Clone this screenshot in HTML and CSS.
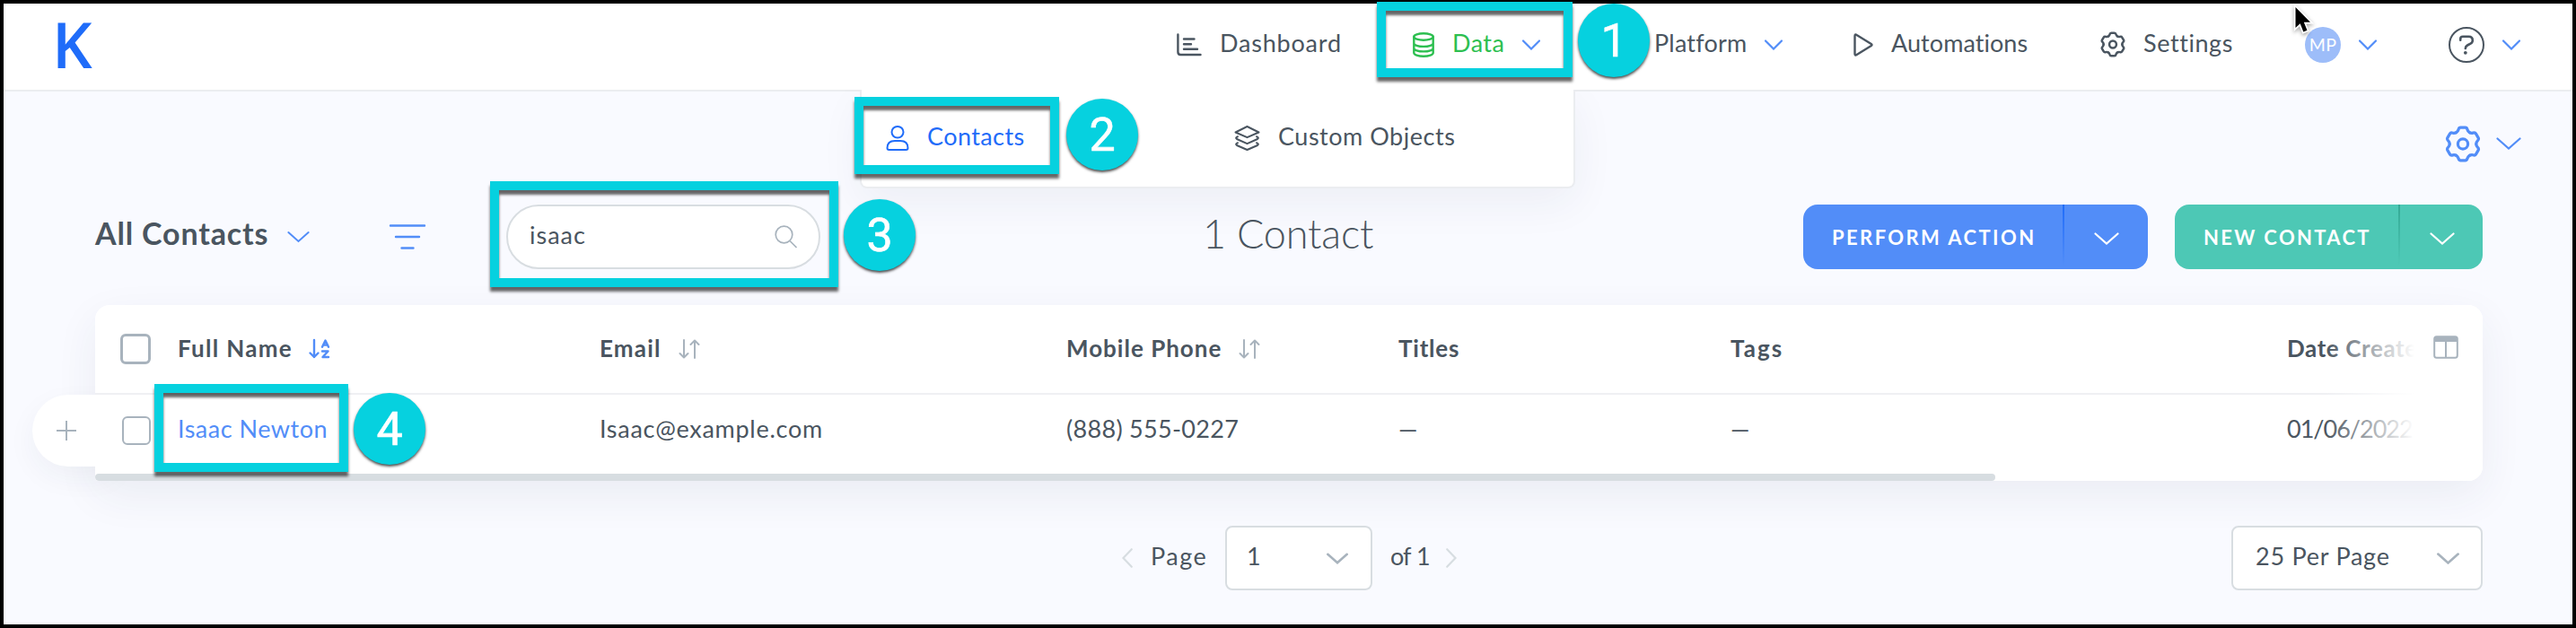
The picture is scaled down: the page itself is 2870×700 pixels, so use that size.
FILE: index.html
```html
<!DOCTYPE html>
<html lang="en">
<head>
<meta charset="utf-8">
<title>Contacts</title>
<link rel="stylesheet" href="styles.css">
</head>
<body>
<svg class="defs" width="0" height="0" aria-hidden="true">
  <symbol id="chev" viewBox="0 0 28 14"><path d="M1.5 1.5 14 12.5 26.5 1.5"/></symbol>
  <symbol id="chev-s" viewBox="0 0 20 12"><path d="M1 1.5 10 10.5 19 1.5"/></symbol>
  <symbol id="gear" viewBox="-20 -20 40 40">
    <g id="teeth">
      <path id="tooth" d="M-7.4-12.8Q-5.6-13.8-5-16Q-4.4-18.3-2.6-18.3H2.6Q4.4-18.3 5-16Q5.6-13.8 7.4-12.8"/>
      <use href="#tooth" transform="rotate(60)"/><use href="#tooth" transform="rotate(120)"/><use href="#tooth" transform="rotate(180)"/><use href="#tooth" transform="rotate(240)"/><use href="#tooth" transform="rotate(300)"/>
    </g>
    <circle r="5.6"/>
  </symbol>
  <symbol id="sort" viewBox="0 0 24 22"><path d="M6 1V20M1.5 16 6 20.5 10.5 16M18 21V2M13.5 6 18 1.5 22.5 6"/></symbol>
</svg>

<div class="screen">
  <header class="header">
    <span class="logo">K</span>
    <a class="nav-item">
      <svg class="ico" width="28" height="26" viewBox="0 0 28 26"><path d="M1.4 1.5V21Q1.4 24 4.4 24H26.5M8 6.5H19.5M8 12.2H16M8 17.8H23"/></svg>
      <span class="label t-dashboard">Dashboard</span>
    </a>
    <a class="nav-item active">
      <svg class="ico" width="24" height="28" viewBox="0 0 24 28"><ellipse cx="12" cy="5" rx="10.7" ry="3.7"/><path d="M1.3 5V23C1.3 25 6 26.7 12 26.7S22.7 25 22.7 23V5M1.3 12.2C1.3 14.2 6 15.9 12 15.9S22.7 14.2 22.7 12.2M1.3 17.700C1.3 19.700 6 21.400 12 21.400S22.700 19.700 22.700 17.700"/></svg>
      <span class="label t-data">Data</span>
      <svg class="chev" width="20" height="12"><use href="#chev-s"/></svg>
    </a>
    <a class="nav-item">
      <span class="label t-platform">Platform</span>
      <svg class="chev" width="20" height="12"><use href="#chev-s"/></svg>
    </a>
    <a class="nav-item">
      <svg class="ico" width="22" height="26" viewBox="0 0 22 26"><path d="M1.500 3.200Q1.500 .6 3.600 2L19.800 12Q21.300 13 19.800 14L3.600 24Q1.500 25.300 1.500 23Z"/></svg>
      <span class="label t-automations">Automations</span>
    </a>
    <a class="nav-item">
      <svg class="ico gear-s" width="28" height="29"><use href="#gear"/></svg>
      <span class="label t-settings">Settings</span>
    </a>
    <a class="nav-item user">
      <span class="avatar">MP</span>
      <svg class="chev" width="20" height="12"><use href="#chev-s"/></svg>
    </a>
    <a class="nav-item user">
      <svg class="ico help" width="40" height="40" viewBox="0 0 40 40"><circle cx="20" cy="20" r="19"/><path d="M13.200 14.800V13.500Q13.200 10.800 16 10.800H22.500Q26.800 10.800 26.800 15Q26.800 17.500 24.500 18.600L21 20.500Q18.800 21.700 18.800 24"/><circle class="dot" cx="18.800" cy="28.800" r="1.900"/></svg>
      <svg class="chev" width="20" height="12"><use href="#chev-s"/></svg>
    </a>
  </header>

  <nav class="dropdown">
    <a class="sub current">
      <svg class="ico" width="26" height="28" viewBox="0 0 26 28"><rect x="6.500" y="1" width="13" height="12.500" rx="6.300"/><path d="M1.500 25Q1.500 17 10 17H16Q24.500 17 24.500 25Q24.500 27 22.500 27H3.500Q1.500 27 1.500 25Z"/></svg>
      <span class="label t-contacts">Contacts</span>
    </a>
    <a class="sub">
      <svg class="ico" width="29" height="28" viewBox="0 0 29 28"><path d="M14.500 1 27.500 7.500 14.500 13.200 1.500 7.500ZM4 12.200Q.8 13.500 3 15L14.500 20.200 26 15Q28.200 13.500 25 12.200M4 19.200Q.8 20.500 3 22L14.500 27 26 22Q28.200 20.500 25 19.200"/></svg>
      <span class="label t-custom">Custom Objects</span>
    </a>
  </nav>

  <main class="main">
    <div class="page-settings">
      <svg class="gear-l" width="40" height="41"><use href="#gear"/></svg>
      <svg class="chev" width="28" height="14"><use href="#chev"/></svg>
    </div>

    <div class="toolbar">
      <div class="view">
        <span class="view-name">All Contacts</span>
        <svg class="chev" width="25" height="14"><use href="#chev"/></svg>
      </div>
      <svg class="filter" width="40" height="28" viewBox="0 0 40 28"><path d="M1 1.500H39M7 14H33M13.500 26.500H26.500"/></svg>
      <div class="search">
        <span class="t-query">isaac</span>
        <svg class="glass" width="26" height="26" viewBox="0 0 26 26"><circle cx="10.500" cy="10.500" r="9.300"/><path d="M17 17.500 24.500 25"/></svg>
      </div>
      <h1 class="count">1 Contact</h1>
      <div class="actions">
        <button class="btn blue"><span class="btn-text t-perform">PERFORM ACTION</span><span class="btn-more"><svg class="chev" width="28" height="14"><use href="#chev"/></svg></span></button>
        <button class="btn green"><span class="btn-text t-new">NEW CONTACT</span><span class="btn-more"><svg class="chev" width="28" height="14"><use href="#chev"/></svg></span></button>
      </div>
    </div>

    <section class="table-wrap">
      <div class="row-add"><svg width="22" height="22" viewBox="0 0 22 22"><path d="M11 0V22M0 11H22"/></svg></div>
      <div class="card">
        <div class="row head">
          <span class="check"></span>
          <span class="cell"><span class="h-name">Full Name</span>
            <svg class="az" width="24" height="22" viewBox="0 0 24 22"><path d="M6 1V20M1.500 15.500 6 20 10.500 15.500M15 8.700 18.500 1.500 22 8.700M16 6.500H21M15 13.500H21.500L15.500 20H22"/></svg></span>
          <span class="cell"><span class="h-email">Email</span><svg class="sort" width="24" height="22"><use href="#sort"/></svg></span>
          <span class="cell"><span class="h-phone">Mobile Phone</span><svg class="sort" width="24" height="22"><use href="#sort"/></svg></span>
          <span class="cell"><span class="h-titles">Titles</span></span>
          <span class="cell"><span class="h-tags">Tags</span></span>
          <span class="cell"><span class="h-date">Date Created</span></span>
        </div>
        <div class="row body">
          <span class="check thin"></span>
          <span class="cell link b-name">Isaac Newton</span>
          <span class="cell b-email">Isaac@example.com</span>
          <span class="cell b-phone">(888) 555-0227</span>
          <span class="cell">—</span>
          <span class="cell">—</span>
          <span class="cell b-date">01/06/2022</span>
        </div>
        <div class="scrollbar"></div>
        <div class="fade">
          <svg width="28" height="26" viewBox="0 0 28 26"><rect x="1.200" y="1.200" width="25.600" height="23.600" rx="2.500"/><path class="bar" d="M1 3Q1 1 3 1H25Q27 1 27 3V7H1Z"/><path d="M14 6V24"/></svg>
        </div>
      </div>
    </section>

    <footer class="pager">
      <svg class="arrow" width="12" height="22" viewBox="0 0 12 22"><path d="M10.800 1.200 1.500 11 10.800 20.800"/></svg>
      <span class="page-label">Page</span>
      <div class="select page"><span>1</span><svg class="chev" width="24" height="13"><use href="#chev"/></svg></div>
      <span class="of-label">of 1</span>
      <svg class="arrow" width="12" height="22" viewBox="0 0 12 22"><path d="M1.200 1.200 10.500 11 1.200 20.800"/></svg>
      <div class="select size"><span class="t-size">25 Per Page</span><svg class="chev" width="25" height="13"><use href="#chev"/></svg></div>
    </footer>
  </main>

  <div class="frame"></div>
  <div class="mark m1"></div><div class="step s1">1</div>
  <div class="mark m2"></div><div class="step s2">2</div>
  <div class="mark m3"></div><div class="step s3">3</div>
  <div class="mark m4"></div><div class="step s4">4</div>
  <svg class="cursor" width="26" height="40" viewBox="0 0 26 40"><path d="M3.500 6V29L8.700 24.300 12.300 33.500 16.500 31.700 12.800 22.800H20Z"/></svg>
</div>
</body>
</html>
```
FILE: styles.css
```css
* { box-sizing: border-box; }

body {
  margin: 0;
  font-family: Lato, "Open Sans", sans-serif;
  font-size: 27px;
  line-height: 1.2;
  color: #4a5560;
}

svg { display: block; flex: none; fill: none; overflow: visible; }
.defs { position: absolute; }

.screen {
  position: relative;
  width: 2870px;
  height: 700px;
  overflow: hidden;
  background: #f9faff;
}

/* Header */
.header {
  display: grid;
  grid-template-columns: 1253px 263px 269px 222px 275px 228px 160px 1fr;
  align-items: center;
  height: 102px;
  padding-left: 58px;
  background: #fff;
  border-bottom: 2px solid #ebedf0;
}
.logo {
  font: 600 70px/1 "Open Sans", sans-serif;
  color: #1f6cf9;
  padding-bottom: 2px;
}
.nav-item { display: flex; align-items: center; gap: 20px; white-space: nowrap; }
.label { padding-bottom: 3px; }
.ico { stroke: #4a5560; stroke-width: 2.4; stroke-linecap: round; stroke-linejoin: round; }
.active { color: #2dbf50; }
.active .ico { stroke: #2dbf50; }
.chev { stroke: #528df8; stroke-width: 2.2; stroke-linecap: round; stroke-linejoin: miter; }
.gear-s { stroke-width: 3.6; }
.help { stroke-width: 2; }
.help path { stroke-width: 2.6; }
.help .dot { fill: #4a5560; stroke: none; }
.avatar {
  display: flex;
  align-items: center;
  justify-content: center;
  width: 40px;
  height: 40px;
  border-radius: 50%;
  background: #9dbdf9;
  color: #fff;
  font-size: 19.5px;
  letter-spacing: 0.4px;
}
.t-dashboard { letter-spacing: 0.8px; }
.t-data { letter-spacing: 0.46px; }
.t-platform { letter-spacing: 0.2px; }
.t-automations { letter-spacing: 0.06px; }
.t-settings { letter-spacing: 0.58px; }
.t-contacts { letter-spacing: 0.41px; }
.t-custom { letter-spacing: 0.52px; }

/* Submenu under Data */
.dropdown {
  position: absolute;
  left: 958px;
  top: 100px;
  z-index: 1;
  display: grid;
  grid-template-columns: 388px auto;
  align-items: center;
  width: 797px;
  height: 110px;
  padding-left: 27px;
  background: #fff;
  border: solid #ebedf0;
  border-width: 0 2px 2px;
  border-radius: 0 0 8px 8px;
  clip-path: inset(0 -80px -90px -80px);
  box-shadow: 0 16px 48px rgba(40, 50, 80, 0.06);
}
.sub { display: flex; align-items: center; gap: 20px; white-space: nowrap; }
.sub .label { padding-bottom: 4px; }
.sub .ico { stroke-width: 2; }
.current { color: #1f6cf9; }
.current .ico { stroke: #1f6cf9; }

/* Page */
.page-settings {
  display: flex;
  justify-content: flex-end;
  align-items: center;
  gap: 17px;
  height: 126px;
  padding: 0 61px 10px 0;
}
.gear-l { stroke: #528df8; stroke-width: 3.2; stroke-linecap: round; }

.toolbar {
  position: relative;
  z-index: 2;
  display: grid;
  grid-template-columns: 328px 130px 776px 669px auto;
  align-items: center;
  height: 72px;
  padding: 0 104px 0 106px;
}
.view { display: flex; align-items: center; gap: 21px; }
.view-name { font-size: 34px; font-weight: 700; letter-spacing: 0.84px; padding-bottom: 7px; white-space: nowrap; }
.filter { stroke: #528df8; stroke-width: 2.4; stroke-linecap: round; }
.search {
  display: flex;
  align-items: center;
  justify-content: space-between;
  width: 350px;
  height: 72px;
  padding: 0 23px 0 24px;
  background: #fff;
  border: 2px solid #d8dde1;
  border-radius: 36px;
}
.t-query { letter-spacing: 1px; padding-bottom: 3px; }
.glass { stroke: #a8b3bd; stroke-width: 1.7; }
.count { margin: 0; font-size: 45px; font-weight: 300; letter-spacing: -0.16px; padding-bottom: 8px; }
.actions { display: flex; gap: 30px; }
.btn {
  display: flex;
  height: 72px;
  padding: 0;
  border: 0;
  border-radius: 16px;
  color: #fff;
  font: 700 22px/1.2 Lato, sans-serif;
}
.btn-text { flex: none; display: flex; align-items: center; height: 72px; padding: 2px 0 0 32px; white-space: nowrap; }
.t-perform { width: 289px; letter-spacing: 2.41px; }
.t-new { width: 249px; letter-spacing: 2.35px; }
.btn-more { position: relative; display: flex; align-items: center; height: 72px; padding: 4px 32px 0 35px; }
.btn-more::before {
  content: "";
  position: absolute;
  left: 0;
  top: 0;
  width: 2px;
  height: 68px;
}
.btn .chev { stroke: #fff; }
.blue { background: #528df8; }
.blue .btn-more::before { background: linear-gradient(#1f6cf9, #528df8); }
.green { background: #4dc8b5; }
.green .btn-more { padding-right: 31px; }
.green .btn-more::before { background: linear-gradient(#34a995, #4dc8b5); }

/* Table */
.table-wrap { position: relative; margin: 40px 104px 0 106px; }
.card {
  position: relative;
  height: 196px;
  overflow: hidden;
  background: #fff;
  border-radius: 16px 16px 16px 4px;
}
.table-wrap::before {
  content: "";
  position: absolute;
  inset: 0;
  border-radius: 16px;
  box-shadow: 0 16px 48px rgba(40, 50, 80, 0.07);
}
.row-add {
  position: absolute;
  left: -70px;
  top: 100px;
  width: 90px;
  height: 80px;
  display: flex;
  align-items: center;
  padding-left: 27px;
  background: #fff;
  border-radius: 40px 0 0 40px;
  box-shadow: 0 12px 32px rgba(40, 50, 80, 0.05);
}
.row-add svg { stroke: #a8b3bd; stroke-width: 2; }
.row {
  display: grid;
  grid-template-columns: 92px 470px 520px 370px 370px 620px 218px;
  align-items: center;
}
.head { height: 100px; border-bottom: 2px solid #eff0f3; font-size: 26px; font-weight: 700; }
.body { height: 88px; padding-bottom: 8px; }
.cell { display: flex; align-items: center; gap: 19px; white-space: nowrap; }
.body .cell { padding-bottom: 3px; }
.check { width: 34px; height: 34px; margin-left: 28px; border: 3px solid #a8b3bd; border-radius: 6px; background: #fff; }
.thin { width: 32px; height: 32px; margin-left: 30px; border-width: 2px; }
.link { color: #528df8; }
.sort { stroke: #a8b3bd; stroke-width: 2; stroke-linecap: round; stroke-linejoin: round; }
.az { stroke: #528df8; stroke-width: 2.4; stroke-linecap: round; stroke-linejoin: round; margin-left: -1px; }
.h-name { letter-spacing: 1.3px; }
.h-email { letter-spacing: 1.19px; }
.h-phone { letter-spacing: 1px; }
.h-titles { letter-spacing: 0.78px; }
.h-tags { letter-spacing: 2px; }
.h-date { letter-spacing: 0.6px; }
.b-name { letter-spacing: 0.5px; }
.b-email { letter-spacing: 0.72px; }
.b-phone { letter-spacing: 0.3px; }
.b-date { letter-spacing: -1px; }
.scrollbar { width: 2117px; height: 8px; border-radius: 4px; background: #d7dde1; }
.fade {
  position: absolute;
  right: 0;
  top: 0;
  width: 176px;
  height: 196px;
  padding: 34px 0 0 121px;
  background: linear-gradient(90deg, rgba(255, 255, 255, 0), #fff 100px);
}
.fade svg { stroke: #a8b3bd; stroke-width: 2; }
.fade .bar { fill: #a8b3bd; stroke: none; }

/* Pagination */
.pager {
  position: relative;
  display: flex;
  align-items: center;
  height: 72px;
  margin-top: 50px;
  padding: 0 104px 0 1250px;
}
.arrow { stroke: #d7dde1; stroke-width: 2.2; stroke-linecap: round; }
.page-label { width: 83px; margin-left: 20px; padding-bottom: 3px; letter-spacing: 1.5px; }
.select {
  display: flex;
  align-items: center;
  justify-content: space-between;
  height: 72px;
  background: #fff;
  border: 2px solid #d8dde1;
  border-radius: 8px;
}
.select span { padding-bottom: 3px; }
.select .chev { stroke: #a8b3bd; stroke-width: 3; }
.page { width: 164px; padding: 0 25px 0 22px; }
.size { width: 280px; margin-left: auto; padding: 0 24px 0 25px; }
.of-label { width: 62px; margin-left: 20px; padding-bottom: 3px; letter-spacing: -1px; word-spacing: 1px; white-space: nowrap; }
.t-size { letter-spacing: 0.75px; }

/* Window edge and tutorial callouts */
.frame { position: absolute; inset: 0; z-index: 3; border: 4px solid #000; }
.mark {
  position: absolute;
  z-index: 4;
  border: 10px solid #06d1df;
  box-shadow: 0 5px 3px rgba(0, 0, 0, 0.6), inset 0 5px 3px rgba(0, 0, 0, 0.6);
}
.m1 { left: 1534px; top: 2px; width: 218px; height: 84px; }
.m2 { left: 952px; top: 108px; width: 228px; height: 86px; }
.m3 { left: 546px; top: 202px; width: 388px; height: 118px; }
.m4 { left: 172px; top: 428px; width: 216px; height: 98px; }
.step {
  position: absolute;
  z-index: 4;
  display: flex;
  align-items: center;
  justify-content: center;
  width: 80px;
  height: 80px;
  padding-top: 2px;
  border-radius: 50%;
  background: #06d1df;
  box-shadow: 0 2px 3px rgba(0, 0, 0, 0.7);
  color: #fff;
  font: 400 52px/1 Roboto, sans-serif;
  -webkit-text-stroke: 0.6px #fff;
}
.s1 { left: 1758px; top: 4px; height: 82px; }
.s2 { left: 1188px; top: 110px; }
.s3 { left: 940px; top: 222px; }
.s4 { left: 394px; top: 438px; }
.cursor { position: absolute; left: 2554px; top: 2px; z-index: 5; stroke: #fff; stroke-width: 3.5; paint-order: stroke; fill: #000; filter: drop-shadow(0 2px 2px rgba(0, 0, 0, 0.35)); }
```
